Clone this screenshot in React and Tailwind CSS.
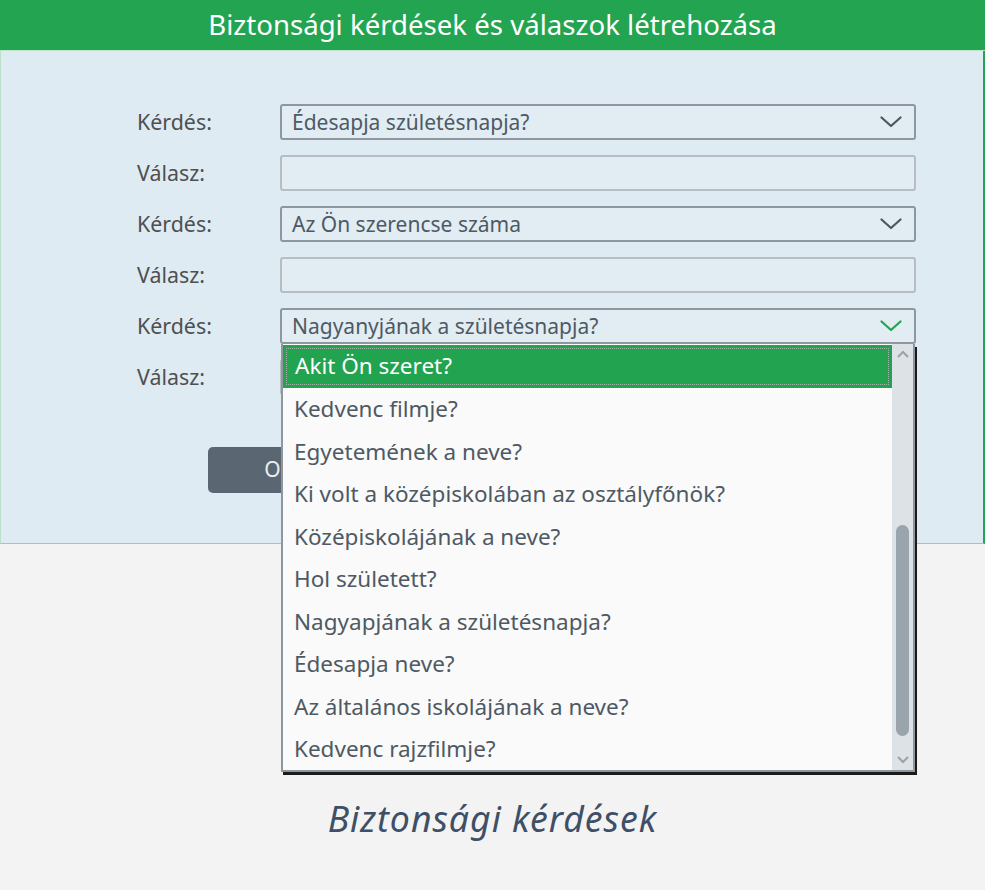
import React from "react";

const font = { fontFamily: '"Noto Sans", "Open Sans", sans-serif' };

function Chevron({ green }) {
  return (
    <svg width="22" height="12" viewBox="0 0 22 12" className="shrink-0">
      <path d="M1.5 1.5 L11 10 L20.5 1.5" fill="none" stroke={green ? "#22a34f" : "#4b5661"} strokeWidth="2.2" strokeLinecap="round" strokeLinejoin="round" />
    </svg>
  );
}

function Select({ value, green, children }) {
  return (
    <div className="relative">
      <div className="h-[36px] w-[636px] rounded-[3px] border-2 border-[#8e979f] bg-[#e1ecf3] flex items-center justify-between pl-[10px] pr-[12px]">
        <span className="text-[21px] text-[#4e5963] leading-none">{value}</span>
        <Chevron green={green} />
      </div>
      {children}
    </div>
  );
}

function Input() {
  return <div className="h-[36px] w-[636px] rounded-[3px] border-2 border-[#b6bdc3] bg-[#e1ecf3]" />;
}

function Row({ label, children }) {
  return (
    <div className="flex items-center">
      <div className="w-[143px] text-[21.4px] text-[#4f4f4f] leading-none">{label}</div>
      {children}
    </div>
  );
}

const options = [
  "Kedvenc filmje?",
  "Egyetemének a neve?",
  "Ki volt a középiskolában az osztályfőnök?",
  "Középiskolájának a neve?",
  "Hol született?",
  "Nagyapjának a születésnapja?",
  "Édesapja neve?",
  "Az általános iskolájának a neve?",
  "Kedvenc rajzfilmje?",
];

function Dropdown() {
  return (
    <div className="absolute left-[1px] top-[36px] z-10 w-[634px] h-[428px] border-l-2 border-[#8e979f] border-r-2 border-b-2 bg-[#fafafa] flex shadow-[2px_3px_0_#1a1a1a]">
      <div className="flex-1 flex flex-col pt-[1px]">
        <div className="h-[43px] bg-[#22a34f] p-[3px] shrink-0">
          <div className="h-full border border-dotted border-[#9fb7a6] flex items-center pl-[8px]">
            <span className="text-[22.5px] text-white leading-none">Akit Ön szeret?</span>
          </div>
        </div>
        {options.map((o) => (
          <div key={o} className="h-[42.5px] flex items-center pl-[11px] shrink-0">
            <span className="text-[22.5px] text-[#4e5963] leading-none">{o}</span>
          </div>
        ))}
      </div>
      <div className="w-[21px] bg-[#dde2e6] flex flex-col items-center justify-between py-[6px]">
        <svg width="12" height="8" viewBox="0 0 12 8"><path d="M1 7 L6 2 L11 7" fill="none" stroke="#9aa3aa" strokeWidth="2" /></svg>
        <div className="flex-1 flex flex-col justify-end pb-[20px] w-full items-center">
          <div className="w-[13px] h-[211px] rounded-full bg-[#9aa4ad]" />
        </div>
        <svg width="12" height="8" viewBox="0 0 12 8"><path d="M1 1 L6 6 L11 1" fill="none" stroke="#9aa3aa" strokeWidth="2" /></svg>
      </div>
    </div>
  );
}

export default function App() {
  return (
    <div className="w-[985px] h-[890px] bg-[#f3f3f3] flex flex-col" style={font}>
      <div className="h-[51px] bg-[#23a450] flex items-center justify-center border-b border-[#bfe3cc]">
        <span className="text-[27.6px] text-white leading-none">Biztonsági kérdések és válaszok létrehozása</span>
      </div>
      <div className="h-[493px] bg-[#deebf2] border-r-2 border-b border-l border-r-[#23a450] border-b-[#8fd4a9] border-l-[#b9e2c9] pl-[136px] pt-[53px] flex flex-col">
        <div className="flex flex-col gap-[15px]">
          <Row label="Kérdés:"><Select value="Édesapja születésnapja?" /></Row>
          <Row label="Válasz:"><Input /></Row>
          <Row label="Kérdés:"><Select value="Az Ön szerencse száma" /></Row>
          <Row label="Válasz:"><Input /></Row>
          <Row label="Kérdés:"><Select value="Nagyanyjának a születésnapja?" green><Dropdown /></Select></Row>
          <Row label="Válasz:"><Input /></Row>
        </div>
        <div className="mt-[52px] pl-[71px] flex">
          <div className="w-[142px] h-[46px] rounded-[5px] bg-[#5a6672] flex items-center justify-center text-[21px] text-[#e8eef2]">OK</div>
        </div>
      </div>
      <div className="flex justify-center pt-[257px]">
        <span className="text-[35.6px] italic text-[#3e4f66] leading-none tracking-[1px]">Biztonsági kérdések</span>
      </div>
    </div>
  );
}
